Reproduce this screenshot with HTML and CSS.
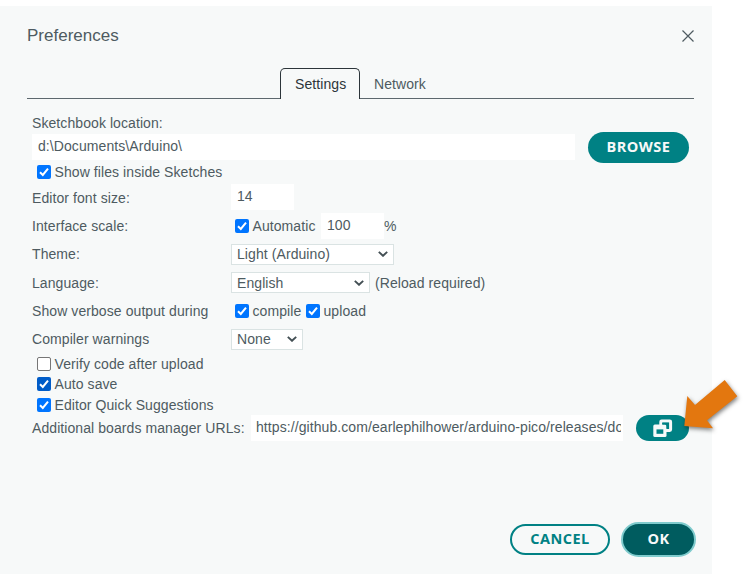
FILE: index.html
```
<!DOCTYPE html>
<html lang="en">
<head>
<meta charset="utf-8">
<title>Preferences</title>
<link rel="stylesheet" href="styles.css">
</head>
<body>
<svg class="defs" width="0" height="0">
  <symbol id="tick" viewBox="0 0 14 14"><path d="M3 7.3 5.8 10 11 3.7" fill="none" stroke="#fff" stroke-width="2"/></symbol>
  <symbol id="chev" viewBox="0 0 10 6"><path d="M.8 .9 5 4.8 9.2 .9" fill="none" stroke="#434f54" stroke-width="1.9"/></symbol>
</svg>
<main class="dialog">
  <header class="title-bar">
    <h1>Preferences</h1>
    <svg class="close" viewBox="0 0 12 12"><path d="M.5 .5 11.5 11.5M11.5 .5 .5 11.5" fill="none" stroke="#4e5b61" stroke-width="1.2"/></svg>
  </header>
  <nav class="tabs">
    <span class="rule rule-left"></span>
    <span class="tab active">Settings</span>
    <span class="tab">Network</span>
  </nav>
  <section class="settings">
    <div class="row line"><span>Sketchbook location:</span></div>
    <div class="row path-row">
      <div class="field path">d:\Documents\Arduino\</div>
      <div class="button browse">BROWSE</div>
    </div>
    <div class="row check-line first"><span class="box on"><svg><use href="#tick"/></svg></span><span>Show files inside Sketches</span></div>
    <div class="row option"><span class="label">Editor font size:</span><div class="field number">14</div></div>
    <div class="row option"><span class="label">Interface scale:</span><span class="box on inset"><svg><use href="#tick"/></svg></span><span class="auto">Automatic</span><div class="field number">100</div><span class="percent">%</span></div>
    <div class="row option"><span class="label">Theme:</span><div class="select theme"><span>Light (Arduino)</span><svg class="chev"><use href="#chev"/></svg></div></div>
    <div class="row option"><span class="label">Language:</span><div class="select language"><span>English</span><svg class="chev"><use href="#chev"/></svg></div><span class="note">(Reload required)</span></div>
    <div class="row option"><span class="label">Show verbose output during</span><span class="box on inset"><svg><use href="#tick"/></svg></span><span class="compile">compile</span><span class="box on"><svg><use href="#tick"/></svg></span><span>upload</span></div>
    <div class="row option"><span class="label">Compiler warnings</span><div class="select warnings"><span>None</span><svg class="chev"><use href="#chev"/></svg></div></div>
    <div class="row check-line"><span class="box"></span><span>Verify code after upload</span></div>
    <div class="row check-line"><span class="box on hover"><svg><use href="#tick"/></svg></span><span>Auto save</span></div>
    <div class="row check-line"><span class="box on"><svg><use href="#tick"/></svg></span><span>Editor Quick Suggestions</span></div>
    <div class="row url-row">
      <span class="url-label">Additional boards manager URLs:</span>
      <div class="field urls"><span>https://github.com/earlephilhower/arduino-pico/releases/do</span></div>
      <div class="button expand">
        <svg viewBox="0 0 20 18"><rect x="7.8" y="2" width="9.8" height="9.4" rx=".8" fill="none" stroke="#f7f9f9" stroke-width="3"/><rect x=".3" y="5.4" width="13.2" height="12.6" rx="1.5" fill="#f7f9f9"/><rect x="3.5" y="10.4" width="6.8" height="4.4" fill="#008184"/><path d="M9.3 3.8H15.8V9.6H13.5V6.8Q13.5 5.4 12 5.4H9.3Z" fill="#008184"/></svg>
      </div>
    </div>
  </section>
  <footer class="actions">
    <div class="button cancel">CANCEL</div>
    <div class="button ok">OK</div>
  </footer>
</main>
<svg class="pointer" viewBox="0 0 66 60"><path d="M4.3 46 7.3 16 15 25 44.7 0 57.3 16.3 27 40.3 33 48.3Z" transform="translate(0 2)" fill="#e3770f"/></svg>
</body>
</html>
```

FILE: styles.css
```
* { box-sizing: border-box; }
body {
  margin: 0;
  height: 574px;
  padding-top: 6px;
  overflow: hidden;
  background: #fff;
  color: #4e5b61;
  font: 14px/20px "Liberation Sans", Arial, sans-serif;
  letter-spacing: .08px;
  white-space: nowrap;
}
.defs { position: absolute; }
.dialog {
  width: 712px;
  height: 568px;
  padding: 19px 18px 0 27px;
  background: #f7f9f9;
}
.title-bar {
  display: flex;
  justify-content: space-between;
  height: 43px;
}
h1 { margin: 0; font-size: 17px; font-weight: 400; line-height: 22px; letter-spacing: 0; }
.close { width: 12px; height: 12px; margin-top: 5px; }
.tabs {
  display: flex;
  width: 667px;
  height: 31px;
}
.rule { border-bottom: 1px solid #5d686e; }
.rule-left { width: 253px; }
.tab {
  flex: 1;
  padding: 6px 14px 0;
  border-bottom: 1px solid #5d686e;
}
.tab.active {
  flex: none;
  width: 80px;
  padding: 5px 0 0 14px;
  border: 1px solid #2c353a;
  border-bottom: 0;
  border-radius: 5px 5px 0 0;
  color: #2c353a;
}
.settings { padding: 14px 0 0 5px; }
.row { display: flex; align-items: center; }
.line { height: 21px; padding-bottom: 2px; }
.path-row { height: 26px; }
.field {
  height: 26px;
  padding: 0 6px;
  background: #fff;
  line-height: 24px;
  overflow: hidden;
}
.path { width: 543px; }
.number { width: 63px; margin-top: -1px; line-height: 25px; }
.button {
  display: flex;
  align-items: center;
  justify-content: center;
  border-radius: 16px;
  color: #f7f9f9;
  background: #008184;
  font: 700 14.5px/20px "Open Sans", sans-serif;
  letter-spacing: .5px;
}
.browse { width: 101px; height: 31px; margin-left: 13px; }
.check-line { height: 20.6px; padding-left: 5px; }
.first { height: 21px; margin: 1px 0 1.6px; }
.box {
  flex: none;
  width: 14px;
  height: 14px;
  margin-right: 3.5px;
  border: 1px solid #767676;
  border-radius: 2px;
  background: #fff;
}
.box.on { border: 0; background: #0075ff; }
.box.hover { background: #005cc8; }
.box svg { display: block; width: 14px; height: 14px; }
.inset { margin-left: 4px; }
.option { height: 28.3px; }
.label { width: 199px; }
.auto { width: 68.5px; }
.compile { width: 53.5px; }
.select {
  display: flex;
  align-items: center;
  justify-content: space-between;
  height: 21px;
  padding: 0 5px;
  border: 1px solid #dae3e3;
  background: #fff;
}
.chev { width: 10px; height: 6px; }
.theme { width: 163px; }
.language { width: 139px; }
.warnings { width: 72px; }
.note { margin-left: 5px; }
.url-row { height: 26px; }
.url-label { width: 218.5px; }
.urls { width: 372.5px; padding-left: 5.5px; }
.urls span { display: block; overflow: hidden; width: 365px; margin-right: -6px; }
.expand { width: 53px; height: 26px; margin-left: 13px; }
.expand svg { width: 20px; height: 18px; }
.actions {
  display: flex;
  align-items: center;
  justify-content: flex-end;
  gap: 11px;
  margin-top: 80px;
  height: 36px;
  margin-right: -2px;
}
.cancel { width: 100px; height: 31px; border: 2px solid #008184; background: transparent; color: #008184; }
.ok { width: 75px; height: 35px; border: 2px solid #7fcbcd; border-radius: 18px; background: #005c5f; }
.pointer {
  position: absolute;
  left: 680px;
  top: 378px;
  width: 66px;
  height: 60px;
  filter: drop-shadow(1px 2px 2px rgba(0, 0, 0, .5));
}
```
